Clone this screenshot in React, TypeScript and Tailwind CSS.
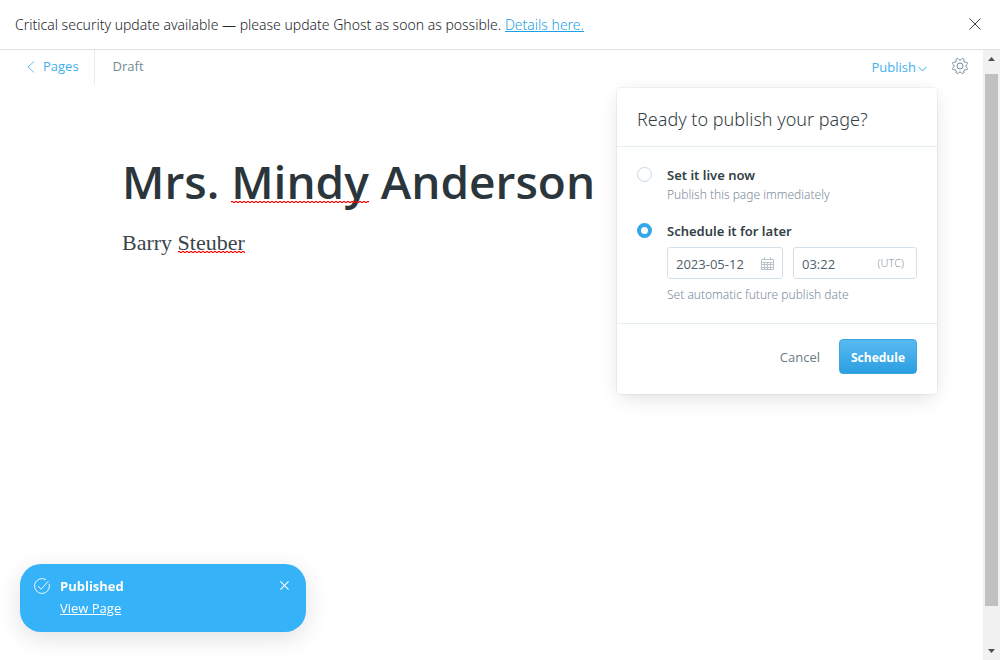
import { useState } from "react";

function CloseIcon({ className }: { className: string }) {
  return (
    <svg viewBox="0 0 24 24" fill="none" stroke="currentColor" className={className} aria-hidden="true">
      <path d="M1 1l22 22M23 1L1 23" />
    </svg>
  );
}

function CogIcon() {
  return (
    <svg viewBox="0 0 24 24" fill="none" stroke="currentColor" strokeWidth="1.5" className="size-4 overflow-visible" aria-hidden="true">
      <path d="M10.546 2.438a1.957 1.957 0 0 0 2.908 0L14.4 1.4a1.959 1.959 0 0 1 3.41 1.413l-.071 1.4a1.958 1.958 0 0 0 2.051 2.054l1.4-.071a1.959 1.959 0 0 1 1.41 3.41l-1.042.94a1.96 1.96 0 0 0 0 2.909l1.042.94a1.959 1.959 0 0 1-1.413 3.41l-1.4-.071a1.958 1.958 0 0 0-2.056 2.056l.071 1.4A1.959 1.959 0 0 1 14.4 22.6l-.941-1.041a1.959 1.959 0 0 0-2.908 0L9.606 22.6A1.959 1.959 0 0 1 6.2 21.192l.072-1.4a1.958 1.958 0 0 0-2.056-2.056l-1.4.071A1.958 1.958 0 0 1 1.4 14.4l1.041-.94a1.96 1.96 0 0 0 0-2.909L1.4 9.606A1.958 1.958 0 0 1 2.809 6.2l1.4.071a1.958 1.958 0 0 0 2.058-2.06L6.2 2.81A1.959 1.959 0 0 1 9.606 1.4z" />
      <circle cx="12" cy="12" r="4.5" />
    </svg>
  );
}

function CalendarIcon() {
  return (
    <svg viewBox="0 0 13 13" fill="none" stroke="currentColor" className="size-[13px] shrink-0 text-[#b9c4c9]" aria-hidden="true">
      <path d="M.5 2.5h12v10H.5zM.5 5.5h12M.5 7.5h12M.5 10.5h12M3.5 5v7.5M6.5 5v7.5M9.5 5v7.5M3.5 0v3M9.5 0v3" />
    </svg>
  );
}

function Misspelled({ id, children }: { id: string; children: string }) {
  return (
    <span className="relative inline-block leading-none">
      {children}
      <svg className="absolute top-full left-0 -mt-[3px] h-0.5 w-full" shapeRendering="crispEdges" aria-hidden="true">
        <pattern id={id} width="4" height="2" patternUnits="userSpaceOnUse">
          <path d="M0 0h2v1H0zM2 1h2v1H2z" fill="#ff0000" />
          <path d="M0 1h2v1H0zM2 0h2v1H2z" fill="#ff0000" fillOpacity="0.3" />
        </pattern>
        <rect width="100%" height="2" fill={`url(#${id})`} />
      </svg>
    </span>
  );
}

const radioClass =
  "mt-0.5 size-[15px] shrink-0 appearance-none rounded-full border border-[#c5d9e6] bg-white checked:border-4 checked:border-[#33a7e9]";

function PublishMenu() {
  const [mode, setMode] = useState("later");
  return (
    <form
      className="absolute top-full right-0 z-10 mt-1 w-80 rounded-[4px] bg-white shadow-[0_0_0_1px_rgba(0,0,0,0.04),0_8px_20px_-4px_rgba(39,44,49,0.12),0_0_16px_rgba(39,44,49,0.04)]"
      onSubmit={(e) => e.preventDefault()}
    >
      <h2 className="border-b border-[#e3edf4] px-5 pt-[19px] pb-[15px] font-['Noto_Sans',sans-serif] text-[18px] leading-6 font-light text-[#343f44]">
        Ready to publish your page?
      </h2>
      <div className="flex flex-col gap-4 border-b border-[#e3edf4] px-5 pt-[18px] pb-[18px]">
        <div className="flex gap-[15px]">
          <input id="live" type="radio" name="mode" className={radioClass} checked={mode === "live"} onChange={() => setMode("live")} />
          <div className="min-w-0 flex-1">
            <label htmlFor="live" className="block font-['Noto_Sans',sans-serif] text-[13px] leading-5 font-semibold text-[#343f44]">
              Set it live now
            </label>
            <p className="font-['Noto_Sans',sans-serif] text-[12px] leading-5 font-light text-[#7c8b9a]">Publish this page immediately</p>
          </div>
        </div>
        <div className="flex gap-[15px]">
          <input id="later" type="radio" name="mode" className={radioClass} checked={mode === "later"} onChange={() => setMode("later")} />
          <div className="min-w-0 flex-1">
            <label htmlFor="later" className="block font-['Noto_Sans',sans-serif] text-[13px] leading-5 font-semibold text-[#343f44]">
              Schedule it for later
            </label>
            <div className="my-1.5 flex gap-2.5 text-[13px] text-[#50606a]">
              <div className="flex h-8 w-[116px] items-center rounded-[3px] border border-[#d3e0e9] px-2">
                <input aria-label="Publish date" defaultValue="2023-05-12" className="min-w-0 flex-1 pt-[3px] outline-none" />
                <CalendarIcon />
              </div>
              <div className="flex h-8 min-w-0 flex-1 items-center rounded-[3px] border border-[#d3e0e9] pr-3 pl-2">
                <input aria-label="Publish time" defaultValue="03:22" className="min-w-0 flex-1 pt-[3px] outline-none" />
                <span className="text-[11px] font-light text-[#7c8b9a]">(UTC)</span>
              </div>
            </div>
            <p className="font-['Noto_Sans',sans-serif] text-[12px] leading-5 font-light text-[#7c8b9a]">Set automatic future publish date</p>
          </div>
        </div>
      </div>
      <div className="flex items-center justify-end gap-[19px] px-5 pt-[15px] pb-5">
        <button type="button" className="pt-0.5 text-[13px] text-[#6b7b84]">Cancel</button>
        <button type="submit" className="h-[35px] rounded-[4px] border border-[#3ba6e2] bg-linear-to-b from-[#57b9f0] to-[#2a9fe2] px-[11px] pt-0.5 text-[12px] font-bold text-white">
          Schedule
        </button>
      </div>
    </form>
  );
}

function Toast() {
  return (
    <aside className="fixed bottom-7 left-5 flex h-[68px] w-[286px] items-start rounded-[21px] bg-[#36b2f9] pt-3 pr-[17px] pl-3.5 text-[13px] text-white shadow-[0_6px_24px_rgba(0,0,0,0.12)]">
      <svg viewBox="0 0 16 16" fill="none" stroke="currentColor" strokeLinecap="round" className="mt-0.5 mr-2.5 size-4 shrink-0" aria-hidden="true">
        <path d="M15.3 6.2A7.5 7.5 0 1 1 11.8 1.5" strokeWidth="0.9" />
        <path d="M4.3 8.3l2.8 2.9L14.2 3.4" strokeWidth="0.9" />
      </svg>
      <div className="flex-1">
        <p className="leading-5 font-bold">Published</p>
        <a href="#view" className="leading-6 underline">View Page</a>
      </div>
      <button type="button" aria-label="Dismiss" className="mt-[5px]">
        <CloseIcon className="size-[9px] stroke-[3]" />
      </button>
    </aside>
  );
}

function Scrollbar() {
  return (
    <div className="flex w-[17px] shrink-0 flex-col items-center justify-between bg-[#f1f1f1] py-[7px]" aria-hidden="true">
      <svg viewBox="0 0 7 4" className="h-1 w-[7px] fill-[#505050]"><path d="M3.500 0L7 4H0z" /></svg>
      <div className="mt-[13px] mb-[43px] w-[13px] flex-1 bg-[#c1c1c1]" />
      <svg viewBox="0 0 7 4" className="h-1 w-[7px] fill-[#505050]"><path d="M0 0h7L3.500 4z" /></svg>
    </div>
  );
}

export default function App() {
  return (
    <div className="flex h-screen flex-col bg-white font-['Open_Sans','Noto_Sans',sans-serif]">
      <div className="flex h-[50px] shrink-0 items-center justify-between border-b border-[#dfe1e3] pr-[19px] pl-[15px] text-[#1c262b]">
        <p className="font-['Noto_Sans',sans-serif] text-[14px] font-light">
          Critical security update available — please update Ghost as soon as possible.{" "}
          <a href="#details" className="text-[#1e9fe6] underline">Details here.</a>
        </p>
        <button type="button" aria-label="Close" className="pb-0.5">
          <CloseIcon className="size-3 stroke-[2] text-[#343f44]" />
        </button>
      </div>
      <div className="flex min-h-0 flex-1">
        <main className="min-w-0 flex-1">
          <header className="flex h-[34px] items-stretch justify-between pr-[15px] text-[13px]">
            <div className="flex">
              <a href="#pages" className="flex items-center gap-2 border-r border-[#e3edf4] pr-[15px] pl-[27px] text-[#3eb0ef]">
                <svg viewBox="0 0 8 12" fill="none" stroke="currentColor" strokeWidth="0.8" className="h-3 w-2" aria-hidden="true">
                  <path d="M7 .5L1 6l6 5.500" />
                </svg>
                Pages
              </a>
              <span className="flex items-center pl-[18px] text-[#738a94]">Draft</span>
            </div>
            <div className="flex items-center gap-[15px]">
              <div className="relative flex items-center self-stretch pr-2.5">
                <button type="button" className="flex items-center gap-[2px] pt-0.5 text-[#3eb0ef]">
                  Publish
                  <svg viewBox="0 0 9 6" fill="none" stroke="currentColor" className="mt-0.5 h-1.5 w-[9px]" aria-hidden="true">
                    <path d="M.5.8L4.500 5 8.500.8" />
                  </svg>
                </button>
                <PublishMenu />
              </div>
              <button type="button" aria-label="Settings" className="pb-0.5 text-[#738a94]">
                <CogIcon />
              </button>
            </div>
          </header>
          <article className="px-[122px] pt-[65px]">
            <h1 className="text-[46px] leading-[64px] font-semibold text-[#2b363c]">
              Mrs. <Misspelled id="title-mark">Mindy</Misspelled> Anderson
            </h1>
            <p className="mt-3.5 font-['Liberation_Serif',serif] text-[22px] leading-8 text-[#3a454b]">
              Barry <Misspelled id="body-mark">Steuber</Misspelled>
            </p>
          </article>
        </main>
        <Scrollbar />
      </div>
      <Toast />
    </div>
  );
}
